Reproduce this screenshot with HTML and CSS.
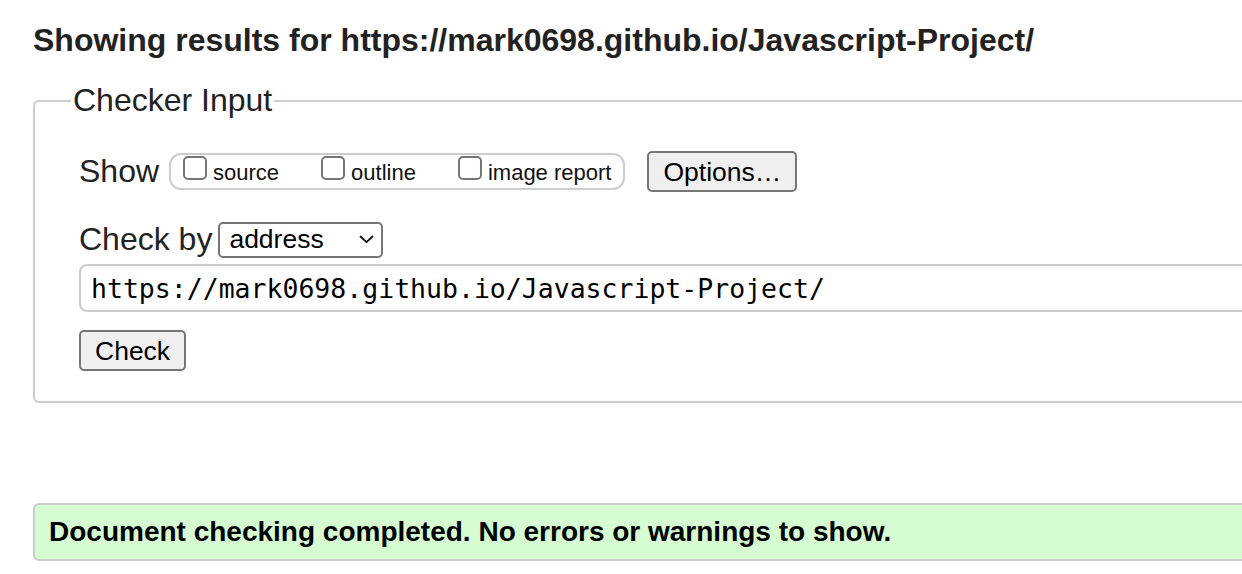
FILE: index.html
```html
<!DOCTYPE html>
<html lang="en">
<head>
<meta charset="utf-8">
<title>Showing results for https://mark0698.github.io/Javascript-Project/</title>
<link rel="stylesheet" href="styles.css">
</head>
<body>
<main class="page">
  <h2 class="title">Showing results for https://mark0698.github.io/Javascript-Project/</h2>
  <fieldset class="checker">
    <legend class="legend">Checker Input</legend>
    <div class="show-row">
      <span class="label">Show</span>
      <div class="show-group">
        <label class="opt"><input type="checkbox" class="box"><span>source</span></label>
        <label class="opt"><input type="checkbox" class="box"><span>outline</span></label>
        <label class="opt"><input type="checkbox" class="box"><span>image report</span></label>
      </div>
      <button class="btn btn-options" type="button">Options…</button>
    </div>
    <div class="by-row">
      <span class="label">Check by</span>
      <div class="select">
        <span>address</span>
        <svg class="chev" width="15" height="9" viewBox="0 0 15 9" aria-hidden="true"><polyline points="1.5,1.5 7.5,7.2 13.5,1.5" fill="none" stroke="#111" stroke-width="1.8" stroke-linecap="round" stroke-linejoin="round"/></svg>
      </div>
    </div>
    <div class="url">https://mark0698.github.io/Javascript-Project/</div>
    <button class="btn btn-check" type="button">Check</button>
  </fieldset>
  <div class="message">Document checking completed. No errors or warnings to show.</div>
</main>
</body>
</html>
```
FILE: styles.css
```css
html, body {
  margin: 0;
  padding: 0;
  overflow: hidden;
  background: #fff;
}

body {
  font-family: "Liberation Sans", Arial, Helvetica, sans-serif;
  color: #222;
}

.page {
  width: 1260px;
  padding: 22px 0 0 33px;
  display: flex;
  flex-direction: column;
}

.title {
  margin: 0;
  font-size: 32px;
  line-height: 37px;
  font-weight: bold;
  color: #222;
}

.checker {
  margin: 23px 0 0;
  padding: 32px 0 30px 44px;
  border: 2px solid #ccc;
  border-radius: 6px;
  display: flex;
  flex-direction: column;
  align-items: flex-start;
  min-width: 0;
}

.legend {
  font-size: 32px;
  line-height: 37px;
  padding: 0 2px;
  margin-left: -8px;
  color: #222;
}

.label {
  font-size: 32px;
  line-height: 37px;
  color: #222;
}

.show-row {
  display: flex;
  align-items: center;
  height: 41px;
}

.show-group {
  display: flex;
  align-items: baseline;
  gap: 42px;
  margin-left: 10px;
  padding: 1px 12px 3px 12px;
  border: 2px solid #ccc;
  border-radius: 12px;
}

.opt {
  display: flex;
  align-items: baseline;
  gap: 6px;
  font-size: 22px;
  line-height: 25px;
  color: #111;
}

.box {
  appearance: none;
  -webkit-appearance: none;
  width: 24px;
  height: 24px;
  margin: 0;
  border: 2px solid #767676;
  border-radius: 5px;
  background: #fff;
}

.btn {
  font-family: "Liberation Sans", Arial, Helvetica, sans-serif;
  font-size: 26.5px;
  color: #000;
  background: #efefef;
  border: 2px solid #767676;
  border-radius: 5px;
  height: 41px;
  padding: 0 14px;
  line-height: 30px;
}

.btn-options {
  margin-left: 22px;
}

.by-row {
  display: flex;
  align-items: center;
  gap: 6px;
  margin-top: 29px;
}

.select {
  display: flex;
  align-items: center;
  justify-content: space-between;
  box-sizing: border-box;
  width: 165px;
  height: 36px;
  padding: 0 7px 0 9px;
  border: 2px solid #767676;
  border-radius: 5px;
  font-size: 26.5px;
  color: #000;
}

.chev {
  display: block;
}

.url {
  align-self: stretch;
  box-sizing: border-box;
  height: 48px;
  margin-top: 6px;
  padding-left: 10px;
  display: flex;
  align-items: center;
  border: 2px solid #ccc;
  border-radius: 8px;
  font-family: "DejaVu Sans Mono", "Liberation Mono", monospace;
  font-size: 26.5px;
  color: #000;
}

.btn-check {
  margin-top: 18px;
}

.message {
  margin-top: 100px;
  box-sizing: border-box;
  height: 58px;
  padding: 0 14px;
  display: flex;
  align-items: center;
  background: #d6fcd1;
  border: 2px solid #ccc;
  border-radius: 6px;
  font-size: 28px;
  font-weight: bold;
  color: #000;
}
```
